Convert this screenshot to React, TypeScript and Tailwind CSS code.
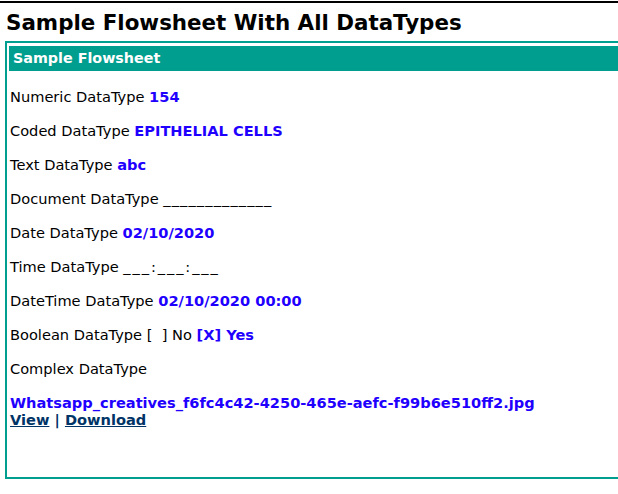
const rows: { label: string; value?: string; blank?: string; blankClass?: string }[] = [
  { label: 'Numeric DataType', value: '154' },
  { label: 'Coded DataType', value: 'EPITHELIAL CELLS' },
  { label: 'Text DataType', value: 'abc' },
  { label: 'Document DataType', blank: '_____________', blankClass: 'tracking-[1.1px]' },
  { label: 'Date DataType', value: '02/10/2020' },
  { label: 'Time DataType', blank: '___:___:___', blankClass: 'tracking-[1.9px]' },
  { label: 'DateTime DataType', value: '02/10/2020 00:00' },
];

export default function App() {
  return (
    <div className="w-[618px] h-[494px] overflow-hidden bg-white text-black font-['DejaVu_Sans',Verdana,sans-serif]">
      <div className="h-[2px] mt-[1px] bg-black" />

      {/* Title */}
      <h1 className="pl-[6px] pt-[7px] h-[38px] text-[21.4px] leading-[26px] font-bold">
        Sample Flowsheet With All DataTypes
      </h1>

      {/* Flowsheet box */}
      <div className="ml-[5px] w-[640px] h-[438px] border-2 border-[#009e8e] pt-[3px] pl-[2px]">
        <div className="h-[25px] bg-[#009e8e] pl-[4px] text-white font-bold text-[14.3px] leading-[25px]">
          Sample Flowsheet
        </div>

        <div className="pl-[1px] pt-[17px] flex flex-col gap-[17px] text-[14.6px] leading-[17px]">
          {rows.map((r) => (
            <div key={r.label}>
              {r.label}{' '}
              {r.value && <span className="font-bold text-[#1f00ff]">{r.value}</span>}
              {r.blank && <span className={r.blankClass}>{r.blank}</span>}
            </div>
          ))}
          <div>
            Boolean DataType [&nbsp;&nbsp;] No{' '}
            <span className="font-bold text-[#1f00ff]">[X] Yes</span>
          </div>
          <div>Complex DataType</div>
          <div className="font-bold">
            <div className="text-[#1f00ff]">Whatsapp_creatives_f6fc4c42-4250-465e-aefc-f99b6e510ff2.jpg</div>
            <div className="text-[#003366]">
              <a className="underline">View</a> | <a className="underline">Download</a>
            </div>
          </div>
        </div>
      </div>
    </div>
  );
}
